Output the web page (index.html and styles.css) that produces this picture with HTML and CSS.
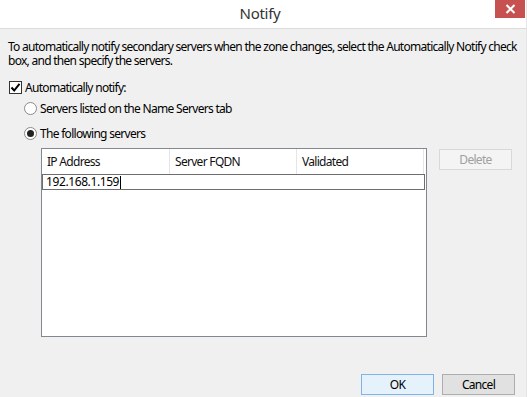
FILE: index.html
```html
<!DOCTYPE html>
<html>
<head>
<meta charset="utf-8">
<link rel="stylesheet" href="styles.css">
</head>
<body>
<div class="window">
  <div class="titlebar">
    <div class="title">Notify</div>
    <div class="close"><svg width="11" height="10" viewBox="0 0 11 10"><path d="M1.5 1 L9.5 9 M9.5 1 L1.5 9" stroke="#fff" stroke-width="2" fill="none"/></svg></div>
  </div>
  <div class="content">
    <p class="desc">To automatically notify secondary servers when the zone changes, select the Automatically Notify check box, and then specify the servers.</p>
    <div class="check-row">
      <span class="checkbox"><svg width="11" height="11" viewBox="0 0 11 11"><path d="M1.5 5.5 L4.2 8.5 L9.5 1.8" stroke="#000" stroke-width="2" fill="none"/></svg></span>
      <span class="label">Automatically notify:</span>
    </div>
    <div class="radio-row r1">
      <span class="radio"></span>
      <span class="label">Servers listed on the Name Servers tab</span>
    </div>
    <div class="radio-row r2">
      <span class="radio on"><span class="dot"></span></span>
      <span class="label">The following servers</span>
    </div>
    <div class="list-area">
      <div class="list">
        <div class="list-head">
          <div class="col c1">IP Address</div>
          <div class="col c2">Server FQDN</div>
          <div class="col c3">Validated</div>
        </div>
        <div class="edit-row"><span class="edit-text">192.168.1.159</span><span class="caret"></span></div>
      </div>
      <div class="btn disabled">Delete</div>
    </div>
    <div class="footer">
      <div class="btn primary">OK</div>
      <div class="btn">Cancel</div>
    </div>
  </div>
</div>
</body>
</html>
```
FILE: styles.css
```css
html, body {
  margin: 0;
  padding: 0;
  background: #f0f0f0;
}
.window {
  width: 527px;
  height: 397px;
  background: #f0f0f0;
  font-family: "Noto Sans", "Open Sans", sans-serif;
  font-size: 12px;
  letter-spacing: -0.7px;
  color: #000;
  box-sizing: border-box;
  border-right: 1px solid #e4e4e4;
  overflow: hidden;
}
.titlebar {
  height: 28px;
  background: #fff;
  border-bottom: 1px solid #dcdcdc;
  display: flex;
  justify-content: center;
  align-items: flex-start;
  position: relative;
}
.title {
  font-size: 15px;
  letter-spacing: -0.3px;
  color: #333;
  margin-top: 3px;
  margin-left: -6px;
}
.close {
  position: absolute;
  right: 1px;
  top: 0;
  width: 30px;
  height: 18px;
  background: #c75050;
  display: flex;
  align-items: center;
  justify-content: center;
}
.content {
  padding: 0 0 0 8px;
}
.desc {
  margin: 11px 0 0 0;
  line-height: 14px;
  letter-spacing: -0.72px;
  width: 514px;
}
.check-row {
  display: flex;
  align-items: center;
  margin-top: 12px;
  margin-left: 1px;
  height: 14px;
}
.checkbox {
  width: 11px;
  height: 11px;
  border: 1px solid #333;
  background: #fff;
  display: flex;
}
.label {
  margin-left: 3px;
}
.radio-row {
  display: flex;
  align-items: center;
  margin-left: 16px;
  height: 14px;
}
.r1 { margin-top: 7px; }
.r2 { margin-top: 11px; }
.radio {
  width: 11px;
  height: 11px;
  border: 1px solid #8a8a8a;
  border-radius: 50%;
  background: #fff;
  display: flex;
  align-items: center;
  justify-content: center;
}
.dot {
  width: 7px;
  height: 7px;
  border-radius: 50%;
  background: #222;
}
.list-area {
  display: flex;
  align-items: flex-start;
  margin-top: 8px;
  margin-left: 33px;
}
.list {
  width: 384px;
  height: 187px;
  border: 1px solid #828790;
  background: #fff;
}
.list-head {
  display: flex;
  height: 25px;
}
.col {
  padding-left: 5px;
  line-height: 25px;
  border-right: 1px solid #e5e5e5;
  box-sizing: border-box;
  color: #111;
}
.c1 { width: 128px; }
.c2 { width: 127px; }
.c3 { width: 127px; }
.edit-row {
  margin: 0 1px 0 0;
  height: 14px;
  border: 1px solid #6e6e6e;
  display: flex;
  align-items: center;
  padding-left: 3px;
}
.edit-text {
  line-height: 14px;
  letter-spacing: -0.4px;
}
.caret {
  width: 1px;
  height: 13px;
  background: #000;
  margin-left: 1px;
}
.btn {
  width: 71px;
  height: 19px;
  border: 1px solid #adadad;
  background: #e1e1e1;
  box-sizing: content-box;
  text-align: center;
  line-height: 19px;
  color: #000;
}
.btn.disabled {
  margin-left: 12px;
  margin-top: 1px;
  background: #f4f4f4;
  border-color: #d9d9d9;
  color: #a0a0a0;
}
.btn.primary {
  background: #e5f1fb;
  border-color: #7eb4ea;
}
.footer {
  display: flex;
  justify-content: flex-end;
  gap: 8px;
  margin-top: 37px;
  padding-right: 11px;
}
```
